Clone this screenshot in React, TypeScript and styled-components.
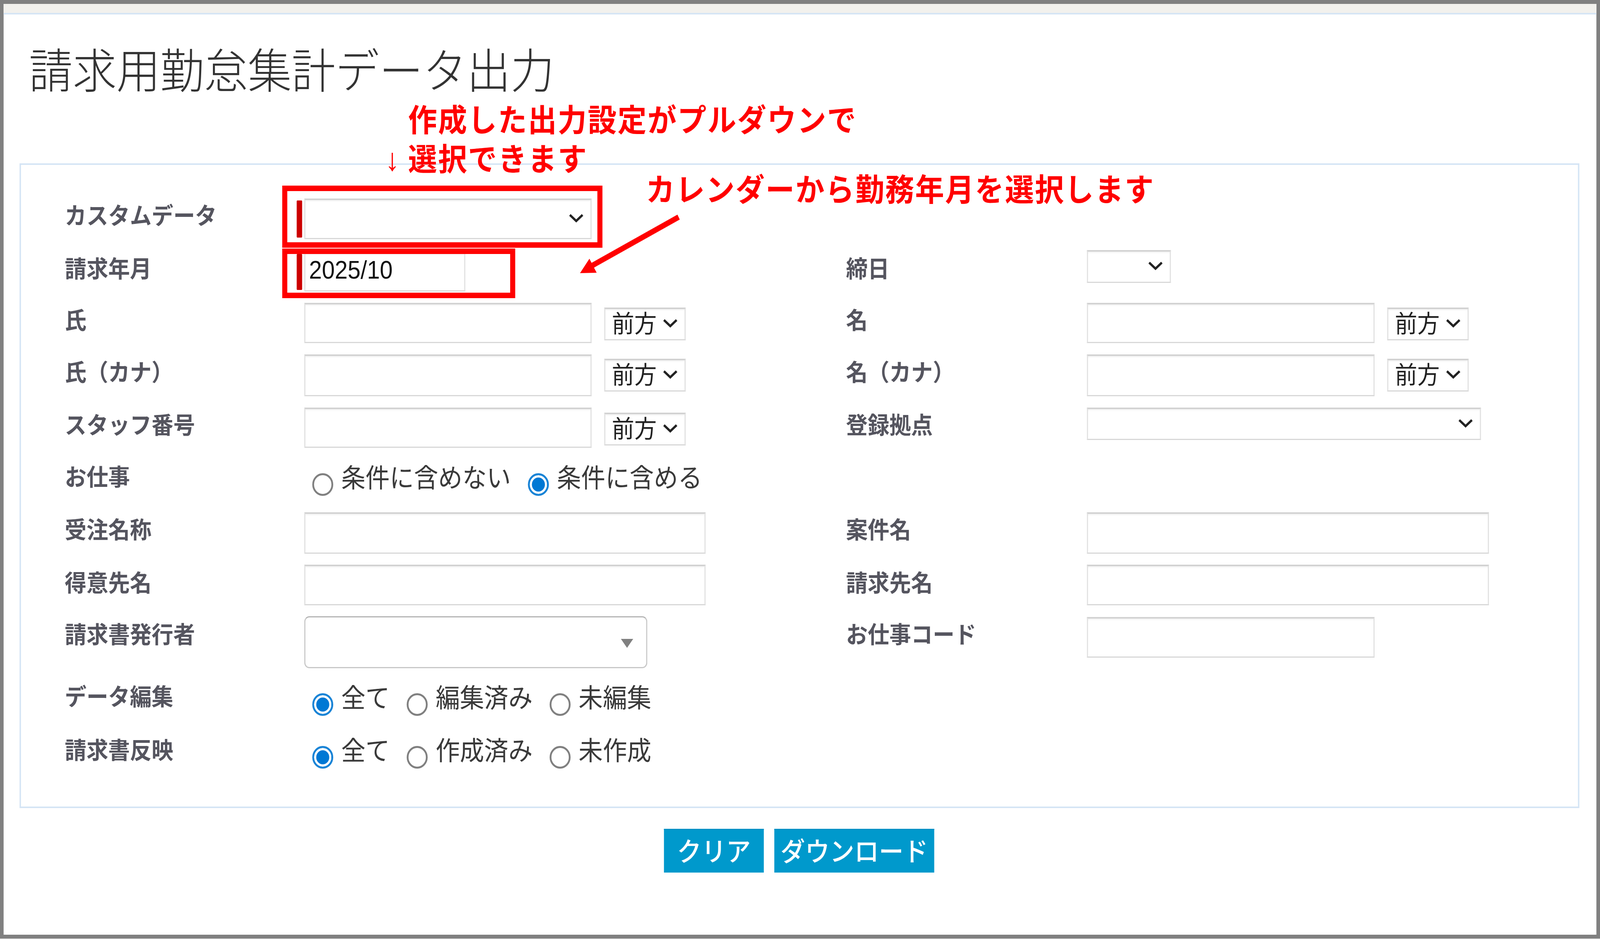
import React from 'react';
import styled, {createGlobalStyle} from 'styled-components';

const PAGE_WIDTH = 4422;

const GlobalStyle = createGlobalStyle`
  html, body {
    margin: 0;
    padding: 0;
    background: #fff;
  }
  * {
    box-sizing: border-box;
  }
`;

const Viewport = styled.div`
  width: 100vw;
  height: 2403px;
  overflow: hidden;
`;

const Page = styled.div`
  position: relative;
  width: ${PAGE_WIDTH}px;
  height: 2403px;
  transform-origin: 0 0;
  font-family: "Noto Sans CJK JP", "Noto Sans", sans-serif;
`;

const Frame = styled.div`
  height: 2402px;
  border: 10px solid #808080;
  background: #fff;
`;

const TopBand = styled.div`
  height: 27px;
  background: #f2f1ed;
  border-bottom: 4px solid #d5e5f5;
`;

const Title = styled.h1`
  margin: 76px 0 185px 70px;
  font-size: 121px;
  line-height: 120px;
  font-weight: 300;
  color: #333;
  white-space: nowrap;
`;

const Panel = styled.section`
  height: 1650px;
  margin: 0 47px 0 44px;
  padding: 84px 0 0 121px;
  border: 4px solid #d5e5f5;
`;

const Row = styled.div<{$h: number}>`
  display: grid;
  grid-template-columns: 662px 1497px 666px 1fr;
  height: ${(p) => p.$h}px;
`;

const Label = styled.div`
  margin-top: 2px;
  font-size: 60px;
  line-height: 80px;
  font-weight: 700;
  color: #55555f;
  white-space: nowrap;
`;

const Controls = styled.div<{$top?: number}>`
  display: flex;
  align-items: flex-start;
  gap: 35px;
  margin-top: ${(p) => p.$top || 0}px;
`;

const TextInput = styled.input<{$w: number; $h: number}>`
  display: block;
  width: ${(p) => p.$w}px;
  height: ${(p) => p.$h}px;
  padding: 0 10px 10px;
  border: 3px solid #e0e0e0;
  border-top: 4px solid #d2d2d2;
  border-bottom-color: #d8d8d8;
  border-radius: 0;
  outline: none;
  background: #fff;
  box-shadow: inset 0 6px 6px -4px rgba(0, 0, 0, 0.07);
  font-family: "Liberation Sans", sans-serif;
  font-size: 64px;
  color: #111;
`;

const SelectBox = styled.div<{$w: number; $h: number; $top?: number}>`
  display: flex;
  align-items: center;
  justify-content: space-between;
  flex-shrink: 0;
  width: ${(p) => p.$w}px;
  height: ${(p) => p.$h}px;
  margin-top: ${(p) => p.$top || 0}px;
  padding: 0 19px 12px 18px;
  border: 3px solid #e0e0e0;
  border-top: 4px solid #d2d2d2;
  border-bottom-color: #d8d8d8;
  background: #fff;
  box-shadow: inset 0 6px 6px -4px rgba(0, 0, 0, 0.07);
  font-size: 62px;
  line-height: 1;
  color: #222;
  white-space: nowrap;
`;

const Required = styled.div`
  position: relative;

  &::before {
    content: '';
    position: absolute;
    left: -21px;
    top: 5px;
    bottom: 4px;
    width: 15px;
    border-radius: 2px;
    background: #cc0000;
  }
`;

const Chevron = styled.svg`
  display: block;
  flex-shrink: 0;
  width: 41px;
  height: 23px;
  margin: 8px 0 0 auto;
  fill: none;
  stroke: #222;
  stroke-width: 6;
`;

const ComboBox = styled.div<{$w: number; $h: number}>`
  display: flex;
  align-items: center;
  justify-content: flex-end;
  width: ${(p) => p.$w}px;
  height: ${(p) => p.$h}px;
  padding-right: 36px;
  border: 3px solid #c8c8c8;
  border-top-color: #b4b4b4;
  border-radius: 14px;
  background: #fff;
`;

const ComboArrow = styled.div`
  width: 0;
  height: 0;
  margin-top: 6px;
  border-left: 17px solid transparent;
  border-right: 17px solid transparent;
  border-top: 23px solid #808080;
`;

const RadioGroup = styled.div<{$top: number}>`
  display: flex;
  gap: 47px;
  margin: ${(p) => p.$top}px 0 0 22px;
`;

const RadioItem = styled.label`
  display: flex;
  align-items: flex-start;
  gap: 22px;
  font-size: 67px;
  line-height: 80px;
  color: #3a3a3a;
  white-space: nowrap;
`;

const Radio = styled.input.attrs({type: 'radio'})`
  appearance: none;
  flex-shrink: 0;
  width: 58px;
  height: 58px;
  margin: 33px 0 0;
  border: 5px solid #808080;
  border-radius: 50%;
  background: #fff;

  &:checked {
    border-color: #1a84d6;
    background: #0078d4;
    box-shadow: inset 0 0 0 6px #fff;
  }
`;

const ButtonRow = styled.div`
  display: flex;
  justify-content: center;
  gap: 29px;
  margin-top: 53px;
  padding-right: 5px;
`;

const ActionButton = styled.button<{$w: number}>`
  width: ${(p) => p.$w}px;
  height: 112px;
  padding: 0 0 8px;
  border: none;
  border-top: 3px solid #0090c4;
  background: #0099cc;
  font-family: inherit;
  font-size: 68px;
  font-weight: 500;
  color: #fff;
  white-space: nowrap;
`;

const RedFrame = styled.div<{$x: number; $y: number; $w: number; $h: number}>`
  position: absolute;
  left: ${(p) => p.$x}px;
  top: ${(p) => p.$y}px;
  width: ${(p) => p.$w}px;
  height: ${(p) => p.$h}px;
  border: 14px solid #ff0000;
`;

const Note = styled.div<{$x: number; $y: number}>`
  position: absolute;
  left: ${(p) => p.$x}px;
  top: ${(p) => p.$y}px;
  font-size: 80px;
  line-height: 100px;
  font-weight: 700;
  letter-spacing: 2.7px;
  color: #ff0000;
  white-space: nowrap;
`;

const NoteIndent = styled.div`
  padding-left: 68px;
`;

const DownMark = styled.span`
  display: inline-block;
  width: 68px;
  padding-left: 4px;
  font-family: "Liberation Sans", sans-serif;
  font-weight: 400;
  letter-spacing: 0;
`;

const ArrowDrawing = styled.svg`
  position: absolute;
  left: 1590px;
  top: 540px;
  width: 300px;
  height: 170px;
`;

const Arrow = () => (
  <ArrowDrawing viewBox="0 0 300 170">
    <path d="M285.5 15.5 L46 140" stroke="#ff0000" strokeWidth="14" fill="none"/>
    <path d="M13 159 L39 122 L59 158 Z" fill="#ff0000"/>
  </ArrowDrawing>
);

const Caret = () => (
  <Chevron viewBox="0 0 41 23">
    <path d="M3 3 L20.5 18.5 L38 3"/>
  </Chevron>
);

const MatchSelect = ({top}: {top: number}) => (
  <SelectBox $w={225} $h={84} $top={top}>前方<Caret/></SelectBox>
);

const Choices = ({top, name, items, checked}: {top: number; name: string; items: string[]; checked: number}) => (
  <RadioGroup $top={top}>
    {items.map((item, i) => (
      <RadioItem key={item}>
        <Radio name={name} defaultChecked={i === checked}/>
        {item}
      </RadioItem>
    ))}
  </RadioGroup>
);

export default function App() {
  // the browser window can be narrower than the page, so squeeze the width to keep every column in view
  const fit = Math.min(1, window.innerWidth / PAGE_WIDTH);

  return (
    <Viewport>
      <GlobalStyle/>
      <Page style={{transform: `scaleX(${fit})`}}>
        <Frame>
          <TopBand/>
          <Title>請求用勤怠集計データ出力</Title>
          <Panel>
            <Row $h={136}>
              <Label>カスタムデータ</Label>
              <Controls $top={2}>
                <Required>
                  <SelectBox $w={794} $h={104}><Caret/></SelectBox>
                </Required>
              </Controls>
            </Row>
            <Row $h={132}>
              <Label>請求年月</Label>
              <Controls $top={3}>
                <Required>
                  <TextInput $w={445} $h={101} defaultValue="2025/10"/>
                </Required>
              </Controls>
              <Label>締日</Label>
              <Controls $top={-2}>
                <SelectBox $w={232} $h={84}><Caret/></SelectBox>
              </Controls>
            </Row>
            <Row $h={133}>
              <Label>氏</Label>
              <Controls $top={1}>
                <TextInput $w={794} $h={103}/>
                <MatchSelect top={12}/>
              </Controls>
              <Label>名</Label>
              <Controls $top={1}>
                <TextInput $w={795} $h={103}/>
                <MatchSelect top={12}/>
              </Controls>
            </Row>
            <Row $h={135}>
              <Label>氏（カナ）</Label>
              <Controls>
                <TextInput $w={794} $h={107}/>
                <MatchSelect top={11}/>
              </Controls>
              <Label>名（カナ）</Label>
              <Controls>
                <TextInput $w={795} $h={107}/>
                <MatchSelect top={11}/>
              </Controls>
            </Row>
            <Row $h={133}>
              <Label>スタッフ番号</Label>
              <Controls $top={1}>
                <TextInput $w={794} $h={103}/>
                <MatchSelect top={13}/>
              </Controls>
              <Label>登録拠点</Label>
              <Controls $top={1}>
                <SelectBox $w={1089} $h={83}><Caret/></SelectBox>
              </Controls>
            </Row>
            <Row $h={135}>
              <Label>お仕事</Label>
              <Controls>
                <Choices top={3} name="job" checked={1} items={['条件に含めない', '条件に含める']}/>
              </Controls>
            </Row>
            <Row $h={136}>
              <Label>受注名称</Label>
              <Controls $top={1}>
                <TextInput $w={1109} $h={106}/>
              </Controls>
              <Label>案件名</Label>
              <Controls $top={1}>
                <TextInput $w={1111} $h={106}/>
              </Controls>
            </Row>
            <Row $h={132}>
              <Label>得意先名</Label>
              <Controls $top={-1}>
                <TextInput $w={1109} $h={104}/>
              </Controls>
              <Label>請求先名</Label>
              <Controls $top={-1}>
                <TextInput $w={1111} $h={104}/>
              </Controls>
            </Row>
            <Row $h={159}>
              <Label>請求書発行者</Label>
              <Controls $top={-1}>
                <ComboBox $w={948} $h={133}><ComboArrow/></ComboBox>
              </Controls>
              <Label>お仕事コード</Label>
              <Controls $top={1}>
                <TextInput $w={795} $h={104}/>
              </Controls>
            </Row>
            <Row $h={137}>
              <Label>データ編集</Label>
              <Controls>
                <Choices top={4} name="edit" checked={0} items={['全て', '編集済み', '未編集']}/>
              </Controls>
            </Row>
            <Row $h={120}>
              <Label>請求書反映</Label>
              <Controls>
                <Choices top={2} name="reflect" checked={0} items={['全て', '作成済み', '未作成']}/>
              </Controls>
            </Row>
          </Panel>
          <ButtonRow>
            <ActionButton $w={276}>クリア</ActionButton>
            <ActionButton $w={442}>ダウンロード</ActionButton>
          </ButtonRow>
        </Frame>
        <RedFrame $x={780} $y={475} $w={885} $h={159}/>
        <RedFrame $x={780} $y={636} $w={644} $h={127}/>
        <Note $x={1060} $y={251}>
          <NoteIndent>作成した出力設定がプルダウンで</NoteIndent>
          <div><DownMark>↓</DownMark>選択できます</div>
        </Note>
        <Note $x={1785} $y={429}>カレンダーから勤務年月を選択します</Note>
        <Arrow/>
      </Page>
    </Viewport>
  );
}
